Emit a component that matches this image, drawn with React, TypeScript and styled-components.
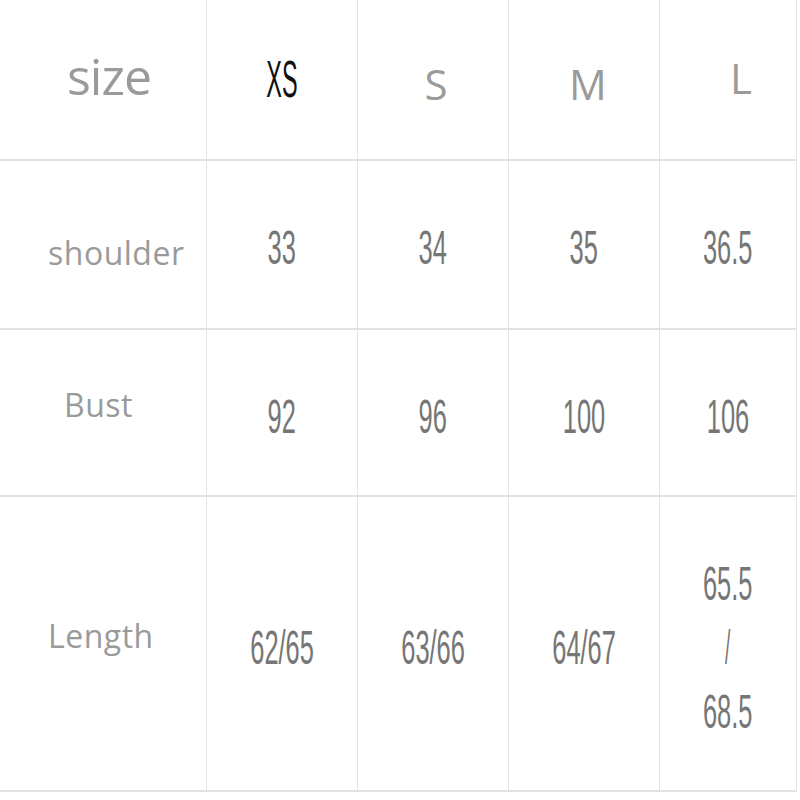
import styled, { createGlobalStyle } from "styled-components";

const GlobalStyle = createGlobalStyle`
  html, body {
    margin: 0;
    padding: 0;
    background: #ffffff;
  }
`;

type Row = {
  label: string;
  labelLeft: number;
  labelShift: number;
  height: number;
  shift: number;
  values: string[][];
};

const sizes = [
  { name: "XS", dark: true, shift: 0, dx: 0 },
  { name: "S", dark: false, shift: 4, dx: 3 },
  { name: "M", dark: false, shift: 4, dx: 4 },
  { name: "L", dark: false, shift: -2, dx: 13 },
];

const rows: Row[] = [
  {
    label: "shoulder",
    labelLeft: 48,
    labelShift: 8,
    height: 169,
    shift: 3,
    values: [["33"], ["34"], ["35"], ["36.5"]],
  },
  {
    label: "Bust",
    labelLeft: 64,
    labelShift: -8,
    height: 167,
    shift: 4,
    values: [["92"], ["96"], ["100"], ["106"]],
  },
  {
    label: "Length",
    labelLeft: 48,
    labelShift: -8,
    height: 295,
    shift: 4,
    values: [["62/65"], ["63/66"], ["64/67"], ["65.5", "/", "68.5"]],
  },
];

const SizeChart = () => (
  <>
    <GlobalStyle />
    <Table>
      <HeaderRow>
        <LabelCell $left={67} $shift={-4}>
          <HeadLabel>size</HeadLabel>
        </LabelCell>
        {sizes.map((s) => (
          <ValueCell key={s.name} $shift={s.shift} $dx={s.dx}>
            {s.dark ? <DarkSize>{s.name}</DarkSize> : <LightSize>{s.name}</LightSize>}
          </ValueCell>
        ))}
      </HeaderRow>
      {rows.map((row) => (
        <BodyRow key={row.label} $height={row.height}>
          <LabelCell $left={row.labelLeft} $shift={row.labelShift}>
            <RowLabel>{row.label}</RowLabel>
          </LabelCell>
          {row.values.map((lines, i) => (
            <ValueCell key={i} $shift={row.shift} $dx={0}>
              <Stack>
                {lines.map((line, j) => (
                  <Number key={j} $slim={line === "/"}>
                    {line}
                  </Number>
                ))}
              </Stack>
            </ValueCell>
          ))}
        </BodyRow>
      ))}
    </Table>
  </>
);

const Table = styled.div`
  width: 797px;
  display: flex;
  flex-direction: column;
  background: #ffffff;
`;

const HeaderRow = styled.div`
  display: grid;
  grid-template-columns: 207px 151px 151px 151px 137px;
  height: 161px;
`;

const BodyRow = styled(HeaderRow)<{ $height: number }>`
  height: ${({ $height }) => $height}px;
`;

const Cell = styled.div`
  display: flex;
  align-items: center;
  border-right: 1px solid #e4e4e4;
  border-bottom: 2px solid #e2e2e2;
  box-sizing: border-box;
`;

const LabelCell = styled(Cell)<{ $left: number; $shift: number }>`
  justify-content: flex-start;
  padding-left: ${({ $left }) => $left}px;
  & > * {
    position: relative;
    top: ${({ $shift }) => $shift}px;
  }
`;

const ValueCell = styled(Cell)<{ $shift: number; $dx: number }>`
  justify-content: center;
  & > * {
    position: relative;
    top: ${({ $shift }) => $shift}px;
    left: ${({ $dx }) => $dx}px;
  }
`;

const HeadLabel = styled.span`
  font-family: "Open Sans", "Noto Sans", sans-serif;
  font-size: 50px;
  letter-spacing: -1px;
  color: #9a9a9a;
  line-height: 1;
`;

const RowLabel = styled.span`
  font-family: "Open Sans", "Noto Sans", sans-serif;
  font-size: 32px;
  letter-spacing: 0.5px;
  color: #9a9a9a;
  line-height: 1;
`;

const LightSize = styled.span`
  font-family: "Open Sans", "Noto Sans", sans-serif;
  font-size: 42px;
  color: #9a9a9a;
  line-height: 1;
`;

const DarkSize = styled.span`
  display: inline-block;
  font-family: "Liberation Sans", Arial, sans-serif;
  font-size: 51px;
  color: #111111;
  line-height: 1;
  transform: scaleX(0.46);
`;

const Stack = styled.div`
  display: flex;
  flex-direction: column;
  align-items: center;
  gap: 30px;
`;

const Number = styled.span<{ $slim: boolean }>`
  display: inline-block;
  font-family: "Liberation Sans", Arial, sans-serif;
  font-size: 48px;
  color: #767676;
  line-height: 34px;
  transform: scaleX(${({ $slim }) => ($slim ? 0.4 : 0.53)});
`;

export default SizeChart;
